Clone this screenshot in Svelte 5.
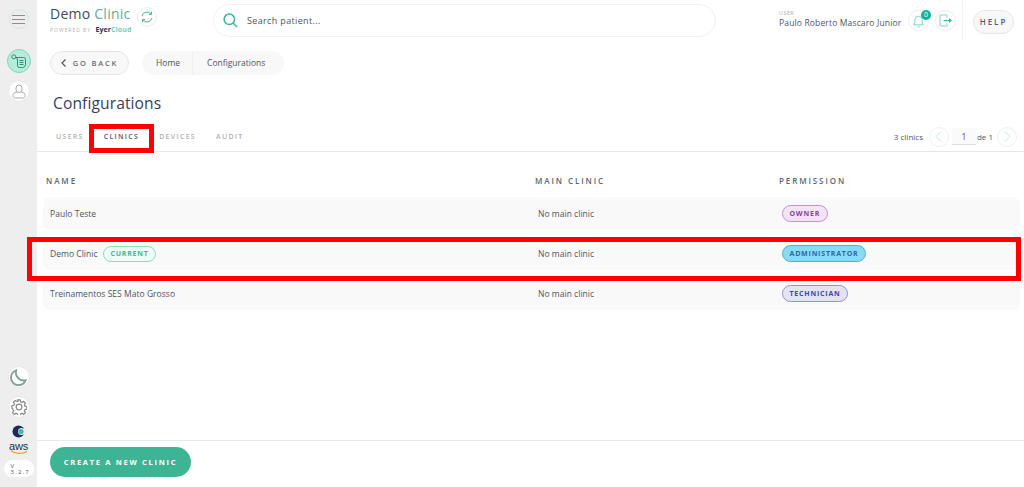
<script>
  const tabs = ['USERS', 'CLINICS', 'DEVICES', 'AUDIT'];
  const rows = [
    { name: 'Paulo Teste', current: false, role: 'OWNER', cls: 'owner' },
    { name: 'Demo Clinic', current: true, role: 'ADMINISTRATOR', cls: 'admin' },
    { name: 'Treinamentos SES Mato Grosso', current: false, role: 'TECHNICIAN', cls: 'tech' }
  ];
</script>

<div class="app">
  <aside class="side">
    <button class="sb menu" aria-label="menu">
      <svg width="13" height="9" viewBox="0 0 13 9"><path d="M0 .5h13M0 4.500h13M0 8.500h13" stroke="#3db594" stroke-width="1"/></svg>
    </button>
    <button class="sb active" aria-label="clinic">
      <svg width="15" height="14" viewBox="0 0 15 14" fill="none" stroke="#2f8f76" stroke-width="1"><circle cx="2.800" cy="2.800" r="2"/><path d="M4.800 3.500h7.700a2 2 0 0 1 2 2v5a3 3 0 0 1-3 3H8.500a2 2 0 0 1-2-2V6a2.500 2.500 0 0 0-1.700-2.500z"/><path d="M8.500 6.500h4M8.500 8.500h4M8.500 10.500h4"/></svg>
    </button>
    <button class="sb profile" aria-label="profile">
      <svg width="14" height="15" viewBox="0 0 14 15" fill="none" stroke="#a9a9a9" stroke-width="1"><path d="M4 5.500V4a3 3 0 0 1 6 0v1.500a3 3 0 0 1-6 0z"/><path d="M4.600 8C2 8.500.8 9.800.8 11.500c0 1.500 1 2.500 2.500 2.500h7.400c1.500 0 2.500-1 2.500-2.500 0-1.700-1.200-3-3.800-3.500"/></svg>
    </button>
    <div class="grow"></div>
    <button class="sb" aria-label="theme">
      <svg width="17" height="17" viewBox="0 0 18 18" fill="none" stroke="#84a097" stroke-width="2"><path d="M6.500 1.500a8 8 0 1 0 10 10.500A8.500 8.500 0 0 1 6.500 1.500z"/></svg>
    </button>
    <button class="sb gear" aria-label="settings">
      <svg width="16" height="16" viewBox="0 0 18 18" fill="none" stroke="#8a8a8a" stroke-width="1.400"><circle cx="9" cy="9" r="3.200"/><path d="M7.600 1h2.800l.4 2.200 1.500.7 1.900-1.200 2 2-1.200 1.900.7 1.500 2.100.5v2.800l-2.100.5-.7 1.500 1.200 1.900-2 2-1.900-1.200-1.500.7-.4 2.100H7.600l-.4-2.100-1.500-.7-1.900 1.200-2-2 1.200-1.900-.7-1.500L1 10.400V7.600l2.300-.5.700-1.500-1.200-1.900 2-2 1.900 1.200 1.500-.7z"/></svg>
    </button>
    <svg class="logo" width="13" height="13" viewBox="0 0 13 13"><circle cx="6.500" cy="6.500" r="6" fill="#1d2a5b"/><circle cx="9.500" cy="6.500" r="3.500" fill="#eeeeee"/><circle cx="9" cy="6.500" r="2.600" fill="#3fb9a0"/></svg>
    <div class="aws">aws
      <svg width="18" height="5" viewBox="0 0 18 5"><path d="M1 .8c4 3 11 3.500 16 .6" fill="none" stroke="#f29a1f" stroke-width="1.200"/></svg>
    </div>
    <div class="ver">V<br />3.2.7</div>
  </aside>

  <div class="main">
    <header class="top">
      <div class="brand">
        <div class="title">Demo <span>Clinic</span></div>
        <div class="powered">POWERED BY <b>Eyer<span>Cloud</span></b></div>
      </div>
      <button class="circle sync" aria-label="sync">
        <svg width="12" height="12" viewBox="0 0 12 12" fill="none" stroke="#3db594" stroke-width="1"><path d="M1 5a5 5 0 0 1 9-1.800M11 7a5 5 0 0 1-9 1.800"/><path d="M10.500 .8v2.600H8M1.500 11.200V8.600H4"/></svg>
      </button>
      <div class="search">
        <svg width="15" height="15" viewBox="0 0 15 15" fill="none" stroke="#3db594" stroke-width="1.500"><circle cx="6.300" cy="6.300" r="5.200"/><path d="M10 10l4 4"/></svg>
        <span>Search patient...</span>
      </div>
      <div class="user">
        <small>USER</small>
        <div>Paulo Roberto Mascaro Junior</div>
      </div>
      <div class="bellwrap">
        <button class="circle act" aria-label="notifications">
          <svg width="11" height="14" viewBox="0 0 11 14" fill="none" stroke="#7fd6bd" stroke-width="1"><path d="M.6 10.800c1-1 1.300-2 1.300-5a3.600 3.600 0 0 1 7.200 0c0 3 .3 4 1.300 5z"/><path d="M4.300 12.800h2.400"/></svg>
        </button>
        <span class="badge">0</span>
      </div>
      <button class="circle act logout" aria-label="logout">
        <svg width="14" height="13" viewBox="0 0 14 13" fill="none" stroke="#7fd6bd" stroke-width="1"><path d="M8 3.500V1H1v11h7V9.500"/><path d="M4.500 6.500h6" stroke="#3db594"/><path d="M10 4l3 2.500L10 9z" fill="#3db594" stroke="none"/></svg>
      </button>
      <div class="helpwrap"><button class="help">HELP</button></div>
    </header>

    <div class="crumbs">
      <button class="back">
        <svg width="5" height="8" viewBox="0 0 5 8" fill="none" stroke="#555" stroke-width="1.200"><path d="M4.500.5L1 4l3.500 3.500"/></svg>
        GO BACK
      </button>
      <nav class="path"><span>Home</span><span>Configurations</span></nav>
    </div>

    <h1>Configurations</h1>

    <div class="tabs">
      {#each tabs as t}
        <span class="tab" class:on={t === 'CLINICS'}>{t}</span>
      {/each}
      <div class="pager">
        <span class="count">3 clinics</span>
        <button class="circle pg" aria-label="previous"><svg width="7" height="11" viewBox="0 0 7 11" fill="none" stroke="#bfe8da" stroke-width="1"><path d="M6 .5l-5 5 5 5"/></svg></button>
        <span class="num">1</span>
        <span class="of">de 1</span>
        <button class="circle pg" aria-label="next"><svg width="7" height="11" viewBox="0 0 7 11" fill="none" stroke="#bfe8da" stroke-width="1"><path d="M1 .5l5 5-5 5"/></svg></button>
      </div>
    </div>

    <div class="table">
      <div class="cols head"><span>NAME</span><span>MAIN CLINIC</span><span>PERMISSION</span></div>
      {#each rows as r}
        <div class="cols row">
          <div class="name">{r.name}{#if r.current}<em>CURRENT</em>{/if}</div>
          <div class="mainc">No main clinic</div>
          <div><span class="role {r.cls}">{r.role}</span></div>
        </div>
      {/each}
    </div>

    <footer class="foot">
      <button class="create">CREATE A NEW CLINIC</button>
    </footer>
  </div>

  <div class="mark m1"></div>
  <div class="mark m2"></div>
</div>

<style>
  :global(body) { margin: 0; background: #fff; }
  .app {
    position: relative; display: flex; width: 1024px; height: 487px; overflow: hidden;
    font-family: "Open Sans", "Noto Sans", sans-serif; color: #50566a;
  }
  button { font-family: inherit; padding: 0; cursor: pointer; }

  .side {
    width: 37px; flex: none; background: #eeeeee; display: flex; flex-direction: column;
    align-items: center; padding: 9px 0 10px; box-sizing: border-box;
  }
  .grow { flex: 1; }
  .sb {
    width: 22px; height: 22px; border-radius: 50%; border: 1px solid #e8e8e8; background: #fff;
    display: flex; align-items: center; justify-content: center; flex: none; box-sizing: border-box;
  }
  .menu { width: 20px; height: 20px; background: #eeeeee; border-color: #e0e0e0; }
  .active { margin-top: 20px; width: 24px; height: 24px; background: #b8ebd9; border-color: #7fd6bd; }
  .profile { margin-top: 7px; }
  .gear { margin-top: 8px; }
  .logo { margin-top: 7px; flex: none; }
  .aws {
    font: 400 11px/7px "Liberation Sans", sans-serif; color: #232f3e; margin-top: 5px;
    display: flex; flex-direction: column; align-items: center; letter-spacing: -.2px;
  }
  .aws svg { display: block; }
  .ver {
    margin-top: 5px; width: 30px; height: 17px; background: #fff; border-radius: 9px;
    font-size: 6px; line-height: 6px; letter-spacing: 1.200px; padding: 3px 0 0 7px;
    box-sizing: border-box; color: #50566a;
  }

  .main { flex: 1; min-width: 0; display: flex; flex-direction: column; }

  .top { display: flex; align-items: flex-start; height: 40px; flex: none; padding-left: 13px; }
  .brand { width: 87px; padding-top: 5px; flex: none; }
  .title { font-size: 14px; line-height: 18px; letter-spacing: .25px; color: #3d4a68; white-space: nowrap; }
  .title span { color: #5fae9b; }
  .powered { font-size: 5px; line-height: 9px; letter-spacing: 1px; color: #b0b0b0; margin-top: 2px; white-space: nowrap; }
  .powered b { font-size: 7px; letter-spacing: .1px; color: #2c3557; margin-left: 2px; }
  .powered b span { color: #6fd0b8; }
  .circle {
    width: 20px; height: 20px; border-radius: 50%; border: 1px solid #ececec; background: #fff;
    display: flex; align-items: center; justify-content: center; flex: none; box-sizing: border-box;
  }
  .act { width: 21px; height: 21px; }
  .sync { margin: 7px 0 0 0; }
  .search {
    margin: 4px 0 0 56px; width: 503px; height: 33px; border: 1px solid #f1f1f1; border-radius: 17px;
    box-sizing: border-box; display: flex; align-items: center; padding-left: 9px; gap: 9px;
    font-size: 9px; font-weight: 500; letter-spacing: .35px; color: #4f5464; flex: none;
  }
  .user { margin: 10px 0 0 63px; width: 129px; white-space: nowrap; flex: none; }
  .user small { display: block; font-size: 5px; line-height: 7px; letter-spacing: .8px; color: #a8a8a8; }
  .user div { font-size: 8.500px; line-height: 12px; font-weight: 500; color: #4f5464; letter-spacing: .15px; }
  .bellwrap { position: relative; margin: 10px 0 0 0; flex: none; }
  .badge {
    position: absolute; top: 0; right: -2px; width: 10px; height: 10px; border-radius: 50%;
    background: #12b398; color: #fff; font-size: 7px; line-height: 10px; text-align: center;
  }
  .logout { margin: 10px 0 0 6px; }
  .helpwrap { margin-left: 6px; padding: 8px 0 8px 10px; height: 24px; border-left: 1px solid #f2f2f2; }
  .help {
    width: 41px; height: 24px; border: 1px solid #e6e6e6; border-radius: 12px; background: #f8f8f8;
    font-size: 8px; font-weight: 600; letter-spacing: 2px; color: #555b6c;
  }

  .crumbs { display: flex; padding: 11px 0 0 13px; gap: 13px; flex: none; }
  .back {
    width: 79px; height: 24px; border: 1px solid #e6e6e6; border-radius: 12px; background: #f8f8f8;
    font-size: 7.500px; font-weight: 600; letter-spacing: 1.800px; color: #666a76;
    display: flex; align-items: center; justify-content: center; gap: 7px; box-sizing: border-box;
  }
  .path {
    display: flex; height: 24px; background: #f8f8f8; border-radius: 12px; font-size: 8.500px; font-weight: 500;
    color: #4f5464; line-height: 24px; letter-spacing: 0;
  }
  .path span { padding: 0 12px 0 14px; }
  .path span + span { border-left: 1px solid #efefef; padding-right: 19px; }

  h1 { margin: 0; padding: 17px 0 0 16px; font-size: 15.600px; line-height: 22px; font-weight: 400; color: #37415e; flex: none; letter-spacing: .1px; }

  .tabs {
    display: flex; align-items: center; margin-top: 8px; padding-left: 19px; gap: 20px; flex: none;
    border-bottom: 1px solid #e8e8e8; box-sizing: border-box; height: 30px;
  }
  .tab { font-size: 7px; font-weight: 600; letter-spacing: 1.300px; color: #b0b0b0; }
  .tab.on { color: #50566a; }
  .pager { margin-left: auto; display: flex; align-items: center; padding-right: 7px; font-size: 8.500px; font-weight: 500; color: #4f5464; }
  .pg { border-color: #f1f1f1; }
  .count { margin-right: 6px; font-size: 8px; }
  .num { width: 24px; height: 17px; margin-left: 3px; background: #fafafa; border-bottom: 1px solid #ddd; text-align: center; line-height: 17px; box-sizing: border-box; }
  .of { margin: 0 4px 0 1px; font-size: 8px; }

  .table { flex: 1; padding: 0 4px 0 6px; }
  .cols { display: grid; grid-template-columns: 489px 244px 1fr; align-items: center; }
  .head { height: 45px; padding: 12px 0 1px 3px; box-sizing: border-box; font-size: 8px; font-weight: 600; letter-spacing: 1.900px; color: #5c6478; }
  .row { height: 33px; margin-bottom: 7px; background: #f9f9f9; border-radius: 8px; padding-left: 7px; font-size: 8.500px; font-weight: 500; color: #4f5464; letter-spacing: .03px; }
  .name { display: flex; align-items: center; gap: 5px; }
  .name em {
    font-style: normal; font-size: 7px; font-weight: 700; letter-spacing: .75px; color: #45b798;
    background: #effbf6; border: 1px solid #8adcc3; border-radius: 8px; height: 16px; line-height: 14px; padding: 0 7px; box-sizing: border-box;
  }
  .mainc { margin-left: -1px; }
  .role {
    display: inline-block; margin-left: -1px; height: 17px; line-height: 15px; border-radius: 8.500px; border: 1px solid;
    padding: 0 6.500px; box-sizing: border-box; font-size: 7px; font-weight: 700; letter-spacing: .8px;
  }
  .owner { background: #f3e3f6; border-color: #c58fd1; color: #8d3fa4; }
  .admin { background: #87dbf5; border-color: #5aaad2; color: #2c68a6; }
  .tech { background: #e3e3f5; border-color: #8d94d4; color: #3d4a9a; }

  .foot { height: 47px; flex: none; border-top: 1px solid #e8e8e8; padding: 6px 0 0 13px; box-sizing: border-box; }
  .create {
    width: 141px; height: 30px; background: #3db594; border: none; border-radius: 15px; color: #fff;
    font-size: 7.500px; font-weight: 700; letter-spacing: 1.700px;
  }

  .mark { position: absolute; border: 5px solid #f00; box-sizing: border-box; pointer-events: none; }
  .m1 { left: 89px; top: 124px; width: 65px; height: 29px; }
  .m2 { left: 27px; top: 237px; width: 994px; height: 44px; }
</style>
